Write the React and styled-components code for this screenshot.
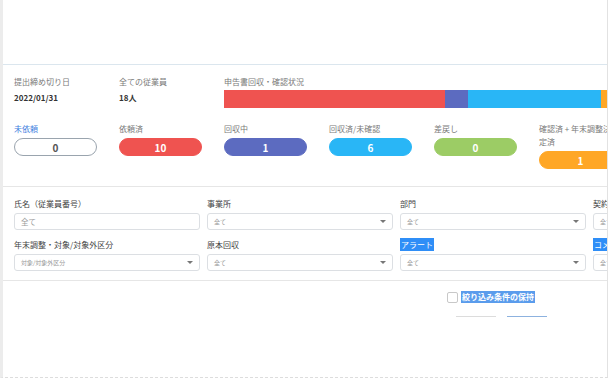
import React from 'react';
import styled, { createGlobalStyle } from 'styled-components';

const GlobalStyle = createGlobalStyle`
    html, body {
        margin: 0;
        padding: 0;
        background: #ffffff;
    }
    body {
        font-family: "Noto Sans CJK JP", "Noto Sans", sans-serif;
        color: #333;
    }
`;

const Frame = styled.div`
    width: 604px;
    height: 377px;
    border-left: 3px solid #ececec;
    border-right: 1px solid #e2e2e2;
    border-bottom: 1px dashed #dddddd;
    overflow: hidden;
    background: #fff;
`;

const Header = styled.div`
    height: 64px;
    border-bottom: 1px solid #dbe6ee;
`;

const Summary = styled.section`
    padding: 10px 0 17px 11px;
    border-bottom: 1px solid #e6e6e6;
`;

const SummaryRow = styled.div`
    display: flex;
    align-items: flex-start;
    gap: 22px;
`;

const Info = styled.div`
    width: 83px;
    flex: none;
`;

const Progress = styled.div`
    width: 420px;
    flex: none;
`;

const Label = styled.div`
    font-size: 8px;
    line-height: 13px;
    color: ${({ $link }) => ($link ? '#3f7fe0' : '#7a7a7a')};
    white-space: nowrap;
`;

const Value = styled.div`
    margin-top: 3px;
    font-size: 8px;
    line-height: 13px;
    font-weight: 700;
    color: #333;
`;

const Bar = styled.div`
    margin-top: 2px;
    height: 18px;
    display: flex;
`;

const Segment = styled.div`
    height: 100%;
    flex: none;
    background: ${({ color }) => color};
`;

const StatusRow = styled.div`
    margin-top: 14px;
    display: grid;
    grid-template-columns: repeat(6, 83px);
    column-gap: 22px;
    align-items: start;
`;

const Pill = styled.div`
    margin-top: 3px;
    height: 18px;
    border-radius: 9px;
    box-sizing: border-box;
    display: flex;
    align-items: center;
    justify-content: center;
    font-size: 10px;
    font-weight: 700;
    color: ${({ color }) => (color ? '#fff' : '#555')};
    background: ${({ color }) => color || '#fff'};
    border: 1px solid ${({ color }) => color || '#9aa4ae'};
`;

const Filters = styled.section`
    padding: 10px 0 9px 11px;
    border-bottom: 1px solid #e6e6e6;
    display: grid;
    grid-template-columns: repeat(4, 186px);
    column-gap: 7px;
    row-gap: 8px;
`;

const Field = styled.div`
    display: flex;
    flex-direction: column;
`;

const FieldLabel = styled.div`
    font-size: 8px;
    line-height: 13px;
    color: #444;
    white-space: nowrap;
`;

const Selected = styled.span`
    background: #2f8ef7;
    color: #fff;
    padding: 1px 1px;
`;

const Input = styled.div`
    margin-top: 3px;
    height: 17px;
    box-sizing: border-box;
    border: 1px solid #dcdfe3;
    border-radius: 3px;
    padding: 0 6px;
    display: flex;
    align-items: center;
    justify-content: space-between;
    font-size: ${({ $large }) => ($large ? '7.5px' : '6px')};
    color: #999;
    white-space: nowrap;
`;

const Caret = styled.span`
    width: 0;
    height: 0;
    border-left: 3px solid transparent;
    border-right: 3px solid transparent;
    border-top: 3px solid #777;
`;

const CheckRow = styled.div`
    margin-top: 10px;
    padding-right: 72px;
    display: flex;
    justify-content: flex-end;
    align-items: center;
    gap: 3px;
`;

const Checkbox = styled.span`
    width: 9px;
    height: 9px;
    border: 1px solid #c8c8c8;
    border-radius: 2px;
    background: #fff;
`;

const CheckLabel = styled.span`
    font-size: 8px;
    line-height: 12px;
    font-weight: 700;
    color: #fff;
    background: #5a9cec;
    padding: 0 1px;
`;

const ButtonRow = styled.div`
    margin-top: 13px;
    padding-right: 60px;
    display: flex;
    justify-content: flex-end;
    gap: 11px;
`;

const Button = styled.div`
    width: 40px;
    height: 0;
    border-top: 1px solid ${({ $primary }) => ($primary ? '#8db2df' : '#dcdcdc')};
`;

const statuses = [
    { lines: ['未依頼'], value: 0, link: true },
    { lines: ['依頼済'], value: 10, color: '#ef5350' },
    { lines: ['回収中'], value: 1, color: '#5c6bc0' },
    { lines: ['回収済/未確認'], value: 6, color: '#29b6f6' },
    { lines: ['差戻し'], value: 0, color: '#9ccc65' },
    { lines: ['確認済 + 年末調整決', '定済'], value: 1, color: '#ffa726' },
];

const filters = [
    { label: '氏名（従業員番号）', value: '全て', text: true },
    { label: '事業所', value: '全て' },
    { label: '部門', value: '全て' },
    { label: '契約形態', value: '全て' },
    { label: '年末調整・対象/対象外区分', value: '対象/対象外区分' },
    { label: '原本回収', value: '全て' },
    { label: 'アラート', value: '全て', selected: true },
    { label: 'コメント', value: '全て', selected: true },
];

const App = () => {
    return (
        <Frame>
            <GlobalStyle />
            <Header />
            <Summary>
                <SummaryRow>
                    <Info>
                        <Label>提出締め切り日</Label>
                        <Value>2022/01/31</Value>
                    </Info>
                    <Info>
                        <Label>全ての従業員</Label>
                        <Value>18人</Value>
                    </Info>
                    <Progress>
                        <Label>申告書回収・確認状況</Label>
                        <Bar>
                            <Segment color="#ef5350" style={{ width: 221 }} />
                            <Segment color="#5c6bc0" style={{ width: 23 }} />
                            <Segment color="#29b6f6" style={{ width: 133 }} />
                            <Segment color="#ffa726" style={{ width: 22 }} />
                        </Bar>
                    </Progress>
                </SummaryRow>
                <StatusRow>
                    {statuses.map((s) => (
                        <div key={s.lines.join('')}>
                            {s.lines.map((line) => (
                                <Label key={line} $link={s.link}>{line}</Label>
                            ))}
                            <Pill color={s.color}>{s.value}</Pill>
                        </div>
                    ))}
                </StatusRow>
            </Summary>
            <Filters>
                {filters.map((f) => (
                    <Field key={f.label}>
                        <FieldLabel>
                            {f.selected ? <Selected>{f.label}</Selected> : f.label}
                        </FieldLabel>
                        <Input $large={f.text}>
                            <span>{f.value}</span>
                            {!f.text && <Caret />}
                        </Input>
                    </Field>
                ))}
            </Filters>
            <CheckRow>
                <Checkbox />
                <CheckLabel>絞り込み条件の保持</CheckLabel>
            </CheckRow>
            <ButtonRow>
                <Button />
                <Button $primary />
            </ButtonRow>
        </Frame>
    );
};

export default App;
